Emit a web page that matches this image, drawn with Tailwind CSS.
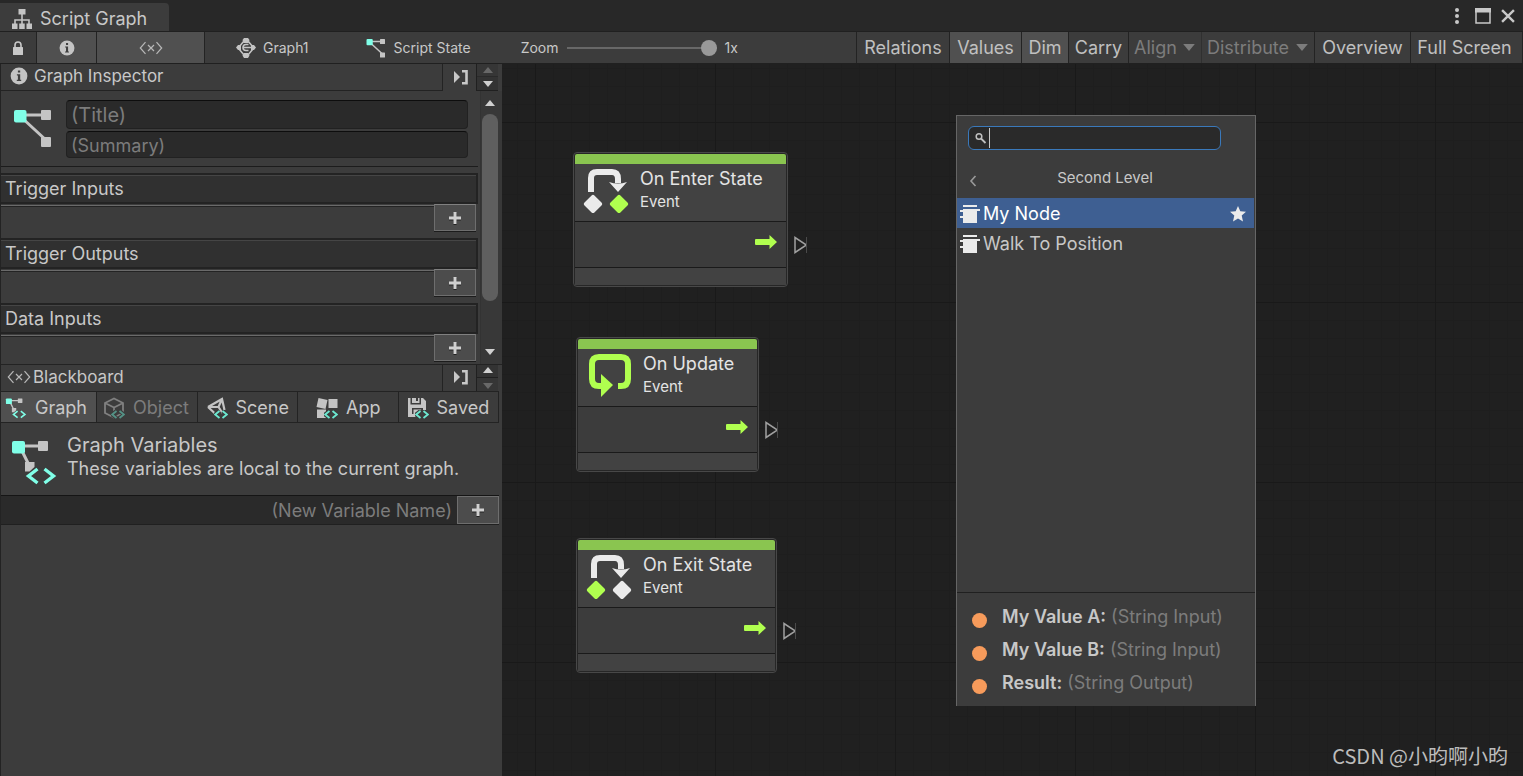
<!DOCTYPE html>
<html lang="en">
<head>
  <meta charset="UTF-8" />
  <meta name="viewport" content="width=device-width, initial-scale=1" />
  <title>Script Graph</title>
  <script src="https://cdn.jsdelivr.net/npm/@tailwindcss/browser@4"></script>
</head>
<body class="h-screen overflow-hidden bg-[#282828] font-['Inter','Noto_Sans_CJK_SC',sans-serif] text-lg leading-6 text-[#c8c8c8]">

  <!-- Shared icons -->
  <svg class="hidden">
    <symbol id="i-info" viewBox="0 0 18 18">
      <circle cx="9" cy="9" r="8.4" fill="#c4c4c4" />
      <path d="M7.9 3.4h2.3v2.2H7.9zM6.9 7.2h3.3v5.6h1v1.2H6.8v-1.2h1.1V8.4h-1z" fill="#404040" />
    </symbol>
    <symbol id="i-vars" viewBox="0 0 24 14">
      <path d="M6.5 1.2L1.3 7l5.2 5.8M17.5 1.2L22.7 7l-5.2 5.8M9 4l6 6M15 4l-6 6" fill="none" stroke="#b8b8b8" stroke-width="1.2" />
    </symbol>
    <symbol id="i-state" viewBox="0 0 40 40">
      <path d="M8 7h26M8 9l26 24" stroke="#c4c4c4" stroke-width="3" fill="none" />
      <rect x="28" y="2" width="10" height="10" rx="1" fill="#c4c4c4" />
      <rect x="28" y="29" width="10" height="10" rx="1" fill="#c4c4c4" />
      <rect x="1" y="2" width="12.5" height="12.5" rx="2" fill="#80ffe8" />
    </symbol>
    <symbol id="i-graphvars" viewBox="0 0 46 48">
      <path d="M8 8h26M9 9l8 16" stroke="#c4c4c4" stroke-width="3" fill="none" />
      <rect x="27" y="3" width="10" height="10" rx="1" fill="#c4c4c4" />
      <path d="M14 24h9.5v5l-5 4.5H14z" fill="#c4c4c4" />
      <rect x="1" y="3" width="13" height="12.5" rx="2" fill="#80ffe8" />
      <path d="M26.5 31l-9 7 9 7M33.500 31l9 7-9 7" stroke="#80ffe8" stroke-width="3.4" fill="none" />
    </symbol>
    <symbol id="i-tag" viewBox="0 0 14 9">
      <path d="M5.500 1L1 4.500 5.500 8M8.500 1L13 4.500 8.500 8" stroke="#3c3c3c" stroke-width="4" fill="none" />
      <path d="M5.500 1L1.200 4.500 5.500 8M8.500 1L12.800 4.500 8.500 8" stroke="#6ce8d0" stroke-width="1.800" fill="none" />
    </symbol>
    <symbol id="i-dock" viewBox="0 0 16 16">
      <path d="M1 2v12l6-6z" fill="#c8c8c8" />
      <path d="M9 2.200h4.500v12H9" stroke="#c8c8c8" stroke-width="2.600" fill="none" />
    </symbol>
    <symbol id="i-up" viewBox="0 0 10 6"><path d="M0 6L5 0l5 6z" fill="currentColor" /></symbol>
    <symbol id="i-down" viewBox="0 0 10 6"><path d="M0 0h10L5 6z" fill="currentColor" /></symbol>
    <symbol id="i-plus" viewBox="0 0 14 14">
      <path d="M7 2v12M1 8h12" stroke="#222" stroke-width="3" />
      <path d="M7 1v12M1 7h12" stroke="#d0d0d0" stroke-width="3" />
    </symbol>
    <symbol id="i-flow" viewBox="0 0 22 14"><path d="M1 4h13.500V0L22 7l-7.500 7v-4H1q-1 0-1-1V5q0-1 1-1z" fill="#b0ff4f" /></symbol>
    <symbol id="i-port" viewBox="0 0 13 18">
      <path d="M1 1.500v15L12.500 9z" fill="none" stroke="#a0a0a0" stroke-width="1.500" />
      <path d="M12.500 1v16" stroke="#4a4a4a" />
    </symbol>
    <symbol id="i-transition" viewBox="0 0 46 46">
      <path d="M8 25V11q0-6 6-6h15q6 0 6 7v4" fill="none" stroke="#ebebeb" stroke-width="6" />
      <path d="M26 15q9 3 18 0L35 25z" fill="#ebebeb" />
    </symbol>
    <symbol id="i-node" viewBox="0 0 20 20">
      <path d="M3 1h14v2H3zM3 5h17v2h-3v12H3v-5H0v-2h3V8H0V6h3z" fill="#ebebeb" />
    </symbol>
  </svg>

  <div class="flex h-full flex-col">
    <!-- Window title bar -->
    <header class="flex h-8 shrink-0 items-end border-b border-[#202020]">
      <div class="flex h-7 w-[169px] items-center gap-2 rounded-tr bg-[#3c3c3c] pl-3 pt-1">
        <svg class="size-5" viewBox="0 0 20 20">
          <path d="M10 5v10M3 16v-5h14v5" stroke="#c4c4c4" stroke-width="1.600" fill="none" />
          <path d="M6.500 0h7v5.500h-7zM0 14.500h5.500V20H0zM7.200 14.500h5.500V20H7.200zM14.500 14.500H20V20h-5.500z" fill="#c4c4c4" />
        </svg>
        <h1>Script Graph</h1>
      </div>
      <div class="ml-auto flex h-full items-center gap-1.5 pr-2">
        <button aria-label="Menu" class="mr-1 w-4">
          <svg class="mx-auto h-4 w-1" viewBox="0 0 4 16" fill="#c8c8c8"><circle cx="2" cy="2" r="2" /><circle cx="2" cy="8" r="2" /><circle cx="2" cy="14" r="2" /></svg>
        </button>
        <button aria-label="Maximize">
          <svg class="size-4" viewBox="0 0 16 16"><path d="M1 1h14v14H1z" fill="none" stroke="#c8c8c8" stroke-width="1.500" /><path d="M0 0h16v4.500H0z" fill="#c8c8c8" /></svg>
        </button>
        <button aria-label="Close" class="pl-1">
          <svg class="size-3.5" viewBox="0 0 13 13"><path d="M1 1l11 11M12 1L1 12" stroke="#c8c8c8" stroke-width="2.200" /></svg>
        </button>
      </div>
    </header>

    <!-- Toolbar -->
    <nav class="flex h-8 shrink-0 items-stretch border-b border-[#202020] bg-[#3c3c3c] text-sm">
      <button aria-label="Lock" class="flex w-9 items-center justify-center">
        <svg class="h-4 w-3" viewBox="0 0 12 16"><path d="M3 8V5q0-3 3-3t3 3v3" stroke="#c8c8c8" stroke-width="1.600" fill="none" /><rect x="1" y="7" width="10" height="8" rx="0.500" fill="#c8c8c8" /></svg>
      </button>
      <button aria-label="Graph inspector" class="flex w-[61px] items-center justify-center border-x border-[#232323] bg-[#505050]">
        <svg class="size-4"><use href="#i-info" /></svg>
      </button>
      <button aria-label="Blackboard" class="flex w-[108px] items-center justify-center border-r border-[#232323] bg-[#505050]">
        <svg class="h-[14px] w-6"><use href="#i-vars" /></svg>
      </button>
      <button class="ml-[31px] flex items-center gap-[7px]">
        <svg class="size-5" viewBox="0 0 20 20">
          <path d="M8 3L3 9v2l5 6h4l5-6V9l-5-6z" stroke="#c4c4c4" stroke-width="1.600" fill="none" />
          <path d="M17 9.500H7M12.500 6.500H10q-3 0-3 3t3 3h2.500" stroke="#c4c4c4" stroke-width="1.600" fill="none" />
          <path d="M8 0h4l1.500 2-1 3h-5l-1-3zM8 15h4l1.500 2.500L12 20H8l-1.500-2.500zM0 9.500L2 7h3v5H2zM20 9.500L18 7h-3v5h3z" fill="#c4c4c4" />
        </svg>
        Graph1
      </button>
      <button class="ml-[57px] flex items-center gap-2">
        <svg class="size-5"><use href="#i-state" /></svg>
        Script State
      </button>
      <label for="zoom" class="ml-[50px] flex items-center">Zoom</label>
      <input id="zoom" type="range" min="0" max="100" value="100" class="ml-2 w-[150px] appearance-none bg-transparent [&::-webkit-slider-runnable-track]:h-0.5 [&::-webkit-slider-runnable-track]:bg-[#686868] [&::-webkit-slider-thumb]:-mt-[7px] [&::-webkit-slider-thumb]:size-4 [&::-webkit-slider-thumb]:appearance-none [&::-webkit-slider-thumb]:rounded-full [&::-webkit-slider-thumb]:bg-[#999999]" />
      <output for="zoom" class="ml-2 flex items-center">1x</output>

      <div class="ml-auto flex items-stretch text-lg text-[#c0c0c0]">
        <button class="w-[94px] border-x border-[#232323]">Relations</button>
        <button class="w-[72px] border-r border-[#232323] bg-[#505050]">Values</button>
        <button class="w-[47px] border-r border-[#232323] bg-[#505050]">Dim</button>
        <button class="w-[60px] border-r border-[#232323]">Carry</button>
        <div class="relative flex w-[73px] border-r border-[#303030] text-[#7c7c7c]">
          <select aria-label="Align" disabled class="w-full appearance-none pl-[5px] opacity-100"><option>Align</option></select>
          <svg class="pointer-events-none absolute right-1.5 top-3 h-[7px] w-3"><use href="#i-down" /></svg>
        </div>
        <div class="relative flex w-[113px] border-r border-[#232323] text-[#7c7c7c]">
          <select aria-label="Distribute" disabled class="w-full appearance-none pl-[5px] opacity-100"><option>Distribute</option></select>
          <svg class="pointer-events-none absolute right-1.5 top-3 h-[7px] w-3"><use href="#i-down" /></svg>
        </div>
        <button class="w-[96px] border-r border-[#232323]">Overview</button>
        <button class="w-[112px] border-r border-[#232323] pr-1">Full Screen</button>
      </div>
    </nav>

    <div class="flex min-h-0 flex-1">
      <!-- Left panel -->
      <aside class="flex w-[502px] shrink-0 flex-col border-l border-[#232323] bg-[#3c3c3c]">
        <!-- Graph inspector -->
        <section class="flex h-[300px] shrink-0 flex-col overflow-hidden">
          <div class="flex h-[27px] shrink-0 pr-1">
            <h2 class="flex flex-1 items-center gap-1.5 border-b border-r border-[#232323] pb-0.5 pl-[9px] text-[17px]"><svg class="size-[18px]"><use href="#i-info" /></svg>Graph Inspector</h2>
            <button aria-label="Dock inspector" class="flex w-[33px] items-center justify-center pb-0.5 pl-0.5"><svg class="size-4"><use href="#i-dock" /></svg></button>
            <div class="flex w-[22px] flex-col border-b border-l border-[#202020] bg-[#363636]">
              <button aria-label="Move up" class="flex flex-1 items-center justify-center border-b border-[#2a2a2a] text-[#686868]"><svg class="h-1.5 w-2.5"><use href="#i-up" /></svg></button>
              <button aria-label="Move down" class="flex flex-1 items-center justify-center bg-[#333333] pt-0.5 text-[#d0d0d0]"><svg class="h-1.5 w-2.5"><use href="#i-down" /></svg></button>
            </div>
          </div>
          <div class="flex min-h-0 flex-1">
            <div class="min-w-0 flex-1">
              <div class="flex gap-[13px] pb-2 pl-3 pr-2.5 pt-[9px]">
                <svg class="mt-2 size-10 shrink-0"><use href="#i-state" /></svg>
                <div class="flex flex-1 flex-col gap-0.5">
                  <input aria-label="Title" placeholder="(Title)" class="h-[29px] w-full rounded border border-[#212121] border-t-[#0d0d0d] bg-[#2a2a2a] px-1 text-xl placeholder:text-[#7c7c7c]" />
                  <input aria-label="Summary" placeholder="(Summary)" class="h-[27px] w-full rounded border border-[#212121] border-t-[#0d0d0d] bg-[#2a2a2a] px-1 pt-0.5 placeholder:text-[#7c7c7c]" />
                </div>
              </div>
              <hr class="mb-1.5 border-[#1c1c1c]" />
              <div class="h-[65px]">
                <h3 class="h-[31px] border-y-2 border-r-2 border-[#232323] bg-[#303030] pl-1 leading-7 shadow-[inset_0_1px_0_#454545]">Trigger Inputs</h3>
                <div class="flex items-start">
                  <div class="mt-px h-0.5 flex-1 border-b border-t border-b-[#232323] border-t-[#6a6a6a]"></div>
                  <button aria-label="Add trigger input" class="mr-0.5 flex h-[27px] w-[42px] items-center justify-center border border-[#6e6e6e] border-t-[#808080] bg-[#4c4c4c] shadow-[0_1px_0_#1c1c1c]"><svg class="size-3.5"><use href="#i-plus" /></svg></button>
                </div>
              </div>
              <div class="h-[65px]">
                <h3 class="h-[31px] border-y-2 border-r-2 border-[#232323] bg-[#303030] pl-1 leading-7 shadow-[inset_0_1px_0_#454545]">Trigger Outputs</h3>
                <div class="flex items-start">
                  <div class="mt-px h-0.5 flex-1 border-b border-t border-b-[#232323] border-t-[#6a6a6a]"></div>
                  <button aria-label="Add trigger output" class="mr-0.5 flex h-[27px] w-[42px] items-center justify-center border border-[#6e6e6e] border-t-[#808080] bg-[#4c4c4c] shadow-[0_1px_0_#1c1c1c]"><svg class="size-3.5"><use href="#i-plus" /></svg></button>
                </div>
              </div>
              <div class="h-[65px]">
                <h3 class="h-[31px] border-y-2 border-r-2 border-[#232323] bg-[#303030] pl-1 leading-7 shadow-[inset_0_1px_0_#454545]">Data Inputs</h3>
                <div class="flex items-start">
                  <div class="mt-px h-0.5 flex-1 border-b border-t border-b-[#232323] border-t-[#6a6a6a]"></div>
                  <button aria-label="Add data input" class="mr-0.5 flex h-[27px] w-[42px] items-center justify-center border border-[#6e6e6e] border-t-[#808080] bg-[#4c4c4c] shadow-[0_1px_0_#1c1c1c]"><svg class="size-3.5"><use href="#i-plus" /></svg></button>
                </div>
              </div>
            </div>
            <!-- Scroll bar -->
            <div class="ml-0.5 flex w-[22px] flex-col items-center border-l border-[#333333] bg-[#383838] pr-1 text-[#d0d0d0]">
              <svg class="mt-[9px] h-1.5 w-2.5 shrink-0"><use href="#i-up" /></svg>
              <div class="mt-2 h-[187px] w-4 shrink-0 rounded-full bg-[#5f5f5f]"></div>
              <svg class="mb-[9px] mt-auto h-1.5 w-2.5 shrink-0"><use href="#i-down" /></svg>
            </div>
          </div>
        </section>

        <!-- Blackboard -->
        <section class="flex min-h-0 flex-1 flex-col">
          <div class="flex h-[27px] shrink-0 border-t border-[#232323] pr-1">
            <h2 class="flex flex-1 items-center gap-px border-r border-[#232323] pb-0.5 pl-[5px] text-[17px]"><svg class="h-[14px] w-[26px]"><use href="#i-vars" /></svg>Blackboard</h2>
            <button aria-label="Dock blackboard" class="flex w-[33px] items-center justify-center pb-0.5 pl-0.5"><svg class="size-4"><use href="#i-dock" /></svg></button>
            <div class="flex w-[22px] flex-col border-l border-[#202020] bg-[#363636]">
              <button aria-label="Move up" class="flex flex-1 items-center justify-center border-b border-[#202020] bg-[#333333] pb-0.5 text-[#d0d0d0]"><svg class="h-1.5 w-2.5"><use href="#i-up" /></svg></button>
              <button aria-label="Move down" class="flex flex-1 items-center justify-center pt-1 text-[#686868]"><svg class="h-1.5 w-2.5"><use href="#i-down" /></svg></button>
            </div>
          </div>
          <div role="tablist" class="mr-[3px] grid h-8 shrink-0 grid-cols-[96px_1fr_1fr_1fr_1fr] border-y border-[#232323]">
            <button role="tab" class="flex items-center gap-2 border-r border-[#232323] bg-[#505050] pl-1 pt-0.5">
              <svg class="size-[22px]"><use href="#i-graphvars" /></svg>Graph
            </button>
            <button role="tab" class="flex items-center gap-2 border-r border-[#232323] pl-1.5 pt-0.5 text-[#7c7c7c]">
              <svg class="size-[22px] opacity-50" viewBox="0 0 22 22">
                <path d="M2 6l9-4.500L20 6v10l-9 4.500L2 16zM2 6l9 4.500L20 6M11 10.500V19" stroke="#c4c4c4" stroke-width="1.800" fill="none" />
                <use href="#i-tag" x="8" y="13" width="14" height="9" />
              </svg>Object
            </button>
            <button role="tab" class="flex items-center gap-2 border-r border-[#232323] pl-2 pt-0.5">
              <svg class="size-[22px]" viewBox="0 0 22 22">
                <path d="M2 10L16 2l2.500 11M2 10l7 6.500M2 10h10.500L16 2M12.500 10l4 6" stroke="#c4c4c4" stroke-width="2.200" fill="none" />
                <use href="#i-tag" x="8" y="13" width="14" height="9" />
              </svg>Scene
            </button>
            <button role="tab" class="flex items-center gap-2 border-r border-[#232323] pl-[18px] pt-0.5">
              <svg class="size-[22px]" viewBox="0 0 22 22">
                <path d="M2.500 1l9 2-2 9-9-2zM12.500 2h9v9h-9zM1 12.500h9V21H1z" fill="#c4c4c4" />
                <use href="#i-tag" x="8" y="13" width="14" height="9" />
              </svg>App
            </button>
            <button role="tab" class="flex items-center gap-2 border-r border-[#232323] pl-2 pt-0.5">
              <svg class="size-[22px]" viewBox="0 0 22 22">
                <path d="M1 1h2.500v6.500H14V1h2l3 3v9h-3v-2H5v6h3l2 3H1zM5 1h4v3h2V1h1.500v5H5z" fill="#c4c4c4" />
                <path d="M6.500 12.500h8L9 17H6.500z" fill="#c4c4c4" />
                <use href="#i-tag" x="8" y="13" width="14" height="9" />
              </svg>Saved
            </button>
          </div>
          <div class="flex h-[72px] shrink-0 items-start gap-2.5 pl-2.5 pt-[11px]">
            <svg class="mt-1 h-12 w-[46px] shrink-0"><use href="#i-graphvars" /></svg>
            <div class="leading-[23px]">
              <h3 class="text-xl leading-[23px]">Graph Variables</h3>
              <p>These variables are local to the current graph.</p>
            </div>
          </div>
          <div class="mr-[3px] flex h-[30px] shrink-0 border-y border-[#202020] border-t-[#151515] bg-[#2a2a2a]">
            <input aria-label="New variable name" placeholder="(New Variable Name)" class="min-w-0 flex-1 px-[5px] pt-px text-right placeholder:text-[#7c7c7c]" />
            <button aria-label="Add variable" class="flex w-[42px] items-center justify-center border border-[#6e6e6e] bg-[#4c4c4c]"><svg class="size-3.5"><use href="#i-plus" /></svg></button>
          </div>
        </section>
      </aside>

      <!-- Graph canvas -->
      <main class="relative min-w-0 flex-1 overflow-hidden bg-[#202020] bg-[linear-gradient(#191919_1px,transparent_1px),linear-gradient(90deg,#191919_1px,transparent_1px),linear-gradient(#1e1e1e_1px,transparent_1px),linear-gradient(90deg,#1e1e1e_1px,transparent_1px)] bg-[size:180px_180px,180px_180px,18px_18px,18px_18px] bg-[position:33px_58px]">

        <!-- On Enter State -->
        <article class="absolute left-[71px] top-[88px] w-[215px] rounded border border-[#484848] bg-[#262626] p-px text-[#e4e4e4]">
          <div class="h-2.5 rounded-t-xs bg-[#8ac550]"></div>
          <div class="flex h-[58px] gap-[11px] border-b border-[#1a1a1a] bg-[#424242] pl-2 pt-[3px]">
            <svg class="size-[46px]" viewBox="0 0 46 46">
              <use href="#i-transition" />
              <rect x="3" y="30" width="14" height="14" rx="2" transform="rotate(45 10 37)" fill="#ebebeb" />
              <rect x="29" y="30" width="14" height="14" rx="2" transform="rotate(45 36 37)" fill="#b0ff4f" />
            </svg>
            <div>
              <h4 class="leading-6">On Enter State</h4>
              <p class="text-[15px] leading-[22px]">Event</p>
            </div>
          </div>
          <div class="flex h-[46px] justify-end border-b border-[#1a1a1a] bg-[#3c3c3c] pr-[9px] pt-[13px]"><svg class="h-[14px] w-[22px]"><use href="#i-flow" /></svg></div>
          <div class="h-[17px] bg-[#424242]"></div>
          <svg class="absolute -right-5 top-[83px] h-[18px] w-[13px]"><use href="#i-port" /></svg>
        </article>

        <!-- On Update -->
        <article class="absolute left-[74px] top-[273px] w-[183px] rounded border border-[#484848] bg-[#262626] p-px text-[#e4e4e4]">
          <div class="h-2.5 rounded-t-xs bg-[#8ac550]"></div>
          <div class="flex h-[58px] gap-[11px] border-b border-[#1a1a1a] bg-[#424242] pl-2 pt-[3px]">
            <svg class="size-[46px]" viewBox="0 0 46 46">
              <path d="M18 34h-5q-7 0-7-7V12q0-7 7-7h22q7 0 7 7v15q0 7-7 7h-3" fill="none" stroke="#b0ff4f" stroke-width="6" />
              <path d="M15 22l12 11-12 12z" fill="#b0ff4f" />
            </svg>
            <div>
              <h4 class="leading-6">On Update</h4>
              <p class="text-[15px] leading-[22px]">Event</p>
            </div>
          </div>
          <div class="flex h-[46px] justify-end border-b border-[#1a1a1a] bg-[#3c3c3c] pr-[9px] pt-[13px]"><svg class="h-[14px] w-[22px]"><use href="#i-flow" /></svg></div>
          <div class="h-[17px] bg-[#424242]"></div>
          <svg class="absolute -right-5 top-[83px] h-[18px] w-[13px]"><use href="#i-port" /></svg>
        </article>

        <!-- On Exit State -->
        <article class="absolute left-[74px] top-[474px] w-[201px] rounded border border-[#484848] bg-[#262626] p-px text-[#e4e4e4]">
          <div class="h-2.5 rounded-t-xs bg-[#8ac550]"></div>
          <div class="flex h-[58px] gap-[11px] border-b border-[#1a1a1a] bg-[#424242] pl-2 pt-[3px]">
            <svg class="size-[46px]" viewBox="0 0 46 46">
              <use href="#i-transition" />
              <rect x="3" y="30" width="14" height="14" rx="2" transform="rotate(45 10 37)" fill="#b0ff4f" />
              <rect x="29" y="30" width="14" height="14" rx="2" transform="rotate(45 36 37)" fill="#ebebeb" />
            </svg>
            <div>
              <h4 class="leading-6">On Exit State</h4>
              <p class="text-[15px] leading-[22px]">Event</p>
            </div>
          </div>
          <div class="flex h-[46px] justify-end border-b border-[#1a1a1a] bg-[#3c3c3c] pr-[9px] pt-[13px]"><svg class="h-[14px] w-[22px]"><use href="#i-flow" /></svg></div>
          <div class="h-[17px] bg-[#424242]"></div>
          <svg class="absolute -right-5 top-[83px] h-[18px] w-[13px]"><use href="#i-port" /></svg>
        </article>

        <!-- Node finder -->
        <div class="absolute left-[454px] top-[51px] w-[300px] border border-b-0 border-[#666666] bg-[#3c3c3c]">
          <div class="relative ml-[11px] mr-[34px] mt-2.5">
            <input aria-label="Search nodes" class="block h-6 w-full rounded-md border border-[#3a79bb] bg-[#2a2a2a] pl-6 text-sm outline-none" />
            <svg class="pointer-events-none absolute left-[7px] top-1.5 size-3" viewBox="0 0 12 12"><circle cx="4" cy="4.500" r="2.800" fill="none" stroke="#c0c0c0" stroke-width="1.500" /><path d="M6 6.500l4.500 4.500" stroke="#c0c0c0" stroke-width="1.800" /></svg>
            <span class="pointer-events-none absolute left-[21px] top-0.5 h-5 w-px bg-[#c8c8c8]"></span>
          </div>
          <div class="flex h-12 items-center pl-3 pt-2.5">
            <button aria-label="Back" class="pt-1"><svg class="h-3 w-2" viewBox="0 0 8 12"><path d="M6.500 1L2 6l4.500 5" stroke="#9a9a9a" stroke-width="1.600" fill="none" /></svg></button>
            <h3 class="flex-1 pb-0.5 pr-[22px] text-center text-[15px]">Second Level</h3>
          </div>
          <ul class="h-[394px]">
            <li class="pr-px"><button class="flex h-[30px] w-full items-center gap-[3px] bg-[#3e5f92] pl-[3px] pr-2 pt-0.5 text-white"><svg class="size-5"><use href="#i-node" /></svg>My Node
              <svg class="ml-auto size-4" viewBox="0 0 16 16"><path d="M8 0l2.300 5.300 5.700.500-4.300 3.800L13 15.500l-5-3-5 3 1.300-5.900L0 5.800l5.700-.500z" fill="#ebebeb" /></svg>
            </button></li>
            <li class="pr-px"><button class="flex h-[30px] w-full items-center gap-[3px] pl-[3px] pt-0.5"><svg class="size-5"><use href="#i-node" /></svg>Walk To Position</button></li>
          </ul>
          <ul class="border-t border-[#202020] pb-[7px] pl-[15px] pt-[7px] leading-[33px] text-[#7c7c7c]">
            <li class="flex items-center gap-[15px]"><span class="mt-2 size-[15px] rounded-full bg-[#f79b5b]"></span><span><b class="font-semibold text-[#c8c8c8]">My Value A:</b> (String Input)</span></li>
            <li class="flex items-center gap-[15px]"><span class="mt-2 size-[15px] rounded-full bg-[#f79b5b]"></span><span><b class="font-semibold text-[#c8c8c8]">My Value B:</b> (String Input)</span></li>
            <li class="flex items-center gap-[15px]"><span class="mt-2 size-[15px] rounded-full bg-[#f79b5b]"></span><span><b class="font-semibold text-[#c8c8c8]">Result:</b> (String Output)</span></li>
          </ul>
        </div>

        <p class="absolute bottom-2 right-[15px] font-['Noto_Sans_CJK_SC',sans-serif] text-xl leading-6 text-[#bcbcbc]">CSDN @小昀啊小昀</p>
      </main>
    </div>
  </div>
</body>
</html>
